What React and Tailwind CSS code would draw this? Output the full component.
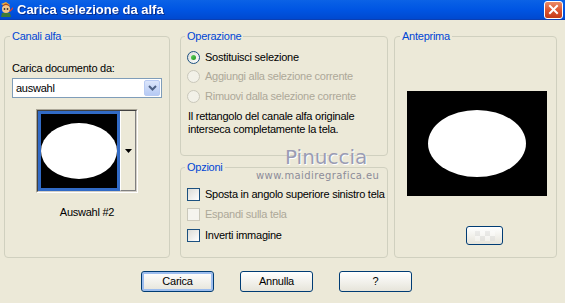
import React from 'react';

const Radio = ({ checked, disabled, label }) => (
  <div className="flex items-center h-[13px]">
    <span
      className={`w-[13px] h-[13px] rounded-full border flex items-center justify-center ${
        disabled ? 'border-[#CAC8BB] bg-[#F2F1E8]' : 'border-[#1C5180] bg-gradient-to-br from-[#DCDCD7] to-white'
      }`}
    >
      {checked && <span className="w-[5px] h-[5px] rounded-full bg-gradient-to-br from-[#63D45F] to-[#179417]" />}
    </span>
    <span className={`ml-[5px] ${disabled ? 'text-[#ACA899]' : 'text-black'}`}>{label}</span>
  </div>
);

const Check = ({ disabled, label }) => (
  <div className="flex items-center h-[13px]">
    <span
      className={`w-[13px] h-[13px] border ${
        disabled ? 'border-[#CAC8BB] bg-[#F5F4EE]' : 'border-[#1C5180] bg-gradient-to-br from-[#DCDCD7] to-white'
      }`}
    />
    <span className={`ml-[5px] ${disabled ? 'text-[#ACA899]' : 'text-black'}`}>{label}</span>
  </div>
);

const XpButton = ({ children, focused }) => (
  <button
    className={`w-[73px] h-[21px] rounded-[3px] border border-[#003C74] bg-gradient-to-b from-white to-[#E6E4DA] text-black leading-none ${
      focused ? 'shadow-[inset_0_0_0_2px_#9DBDEE]' : ''
    }`}
  >
    {children}
  </button>
);

const Group = ({ title, className, legendClass = 'ml-[5px]', children }) => (
  <fieldset className={`border border-[#D0D0BF] rounded-[4px] p-0 ${className}`}>
    <legend className={`${legendClass} px-[2px] leading-[13px] text-[#0046D5]`}>{title}</legend>
    {children}
  </fieldset>
);

export default function App() {
  return (
    <div className="relative w-[565px] h-[303px] overflow-hidden bg-[#ECE9D8] text-[11px] tracking-[-0.25px] font-['Liberation_Sans',Arial,sans-serif]">
      {/* title bar */}
      <div className="h-[20px] flex items-center bg-gradient-to-b from-[#0B62E6] via-[#0055E3] to-[#0049D0] border-b border-[#0A3FB4]">
        <svg width="15" height="17" viewBox="0 0 15 17" className="ml-[-1px]">
          <path d="M2 3 L7 1 L11 4 L8 6 Z" fill="#E8B040" />
          <circle cx="7" cy="8" r="4" fill="#F2C68A" />
          <path d="M3 6 Q7 2 11 6 L10 4 Q7 1 4 4 Z" fill="#B04A18" />
          <circle cx="5.5" cy="8" r="0.9" fill="#333" />
          <circle cx="8.5" cy="8" r="0.9" fill="#333" />
          <path d="M3 12 L11 12 L12 16 L2 16 Z" fill="#3A7A3A" />
          <path d="M10 10 L14 6 L14 8 L11 11 Z" fill="#D84030" />
        </svg>
        <span className="ml-[3px] text-white font-bold text-[13px] tracking-normal drop-shadow-[1px_1px_0_#0A2E8C]">
          Carica selezione da alfa
        </span>
        <div className="ml-auto mr-[2px] w-[19px] h-[18px] rounded-[3px] border border-white bg-gradient-to-b from-[#E98A68] via-[#DC5530] to-[#C43A16] flex items-center justify-center">
          <svg width="11" height="11" viewBox="0 0 11 11">
            <path d="M2 2 L9 9 M9 2 L2 9" stroke="white" strokeWidth="2" strokeLinecap="square" />
          </svg>
        </div>
      </div>

      {/* groups */}
      <div className="flex pt-[10px]">
        <Group title="Canali alfa" className="ml-[4px] w-[166px] h-[228px]">
          <div className="px-[7px]">
            <div className="mt-[19px] leading-[13px]">Carica documento da:</div>
            <div className="mt-[3px] h-[20px] border border-[#7F9DB9] bg-white flex items-center">
              <span className="ml-[3px]">auswahl</span>
              <div className="ml-auto mr-[1px] w-[16px] h-[16px] rounded-[2px] bg-gradient-to-b from-[#DCE6FB] to-[#B6CAF4] border border-[#B9CBF3] flex items-center justify-center">
                <svg width="9" height="6" viewBox="0 0 9 6">
                  <path d="M1 1 L4.5 4.5 L8 1" stroke="#4D6185" strokeWidth="2" fill="none" />
                </svg>
              </div>
            </div>
            <div className="mt-[11px] flex justify-center">
              <div className="flex border border-t-[#ACA899] border-l-[#ACA899] border-b-white border-r-white">
                <div className="flex border border-t-[#404040] border-l-[#404040] border-b-[#D4D0C8] border-r-[#D4D0C8]">
                  <div className="w-[82px] h-[80px] border-[3px] border-[#316AC5] bg-black flex items-center justify-center">
                    <svg width="76" height="74" viewBox="0 0 76 74">
                      <ellipse cx="38" cy="37" rx="38" ry="28" fill="white" />
                    </svg>
                  </div>
                  <div className="w-[16px] border-l border-white border-r border-r-[#808080] border-b border-b-[#808080] flex items-center justify-center">
                    <svg width="7" height="4" viewBox="0 0 7 4">
                      <path d="M0 0 L7 0 L3.5 4 Z" fill="black" />
                    </svg>
                  </div>
                </div>
              </div>
            </div>
            <div className="mt-[13px] text-center leading-[13px]">Auswahl #2</div>
          </div>
        </Group>

        <div className="ml-[10px] w-[208px] flex flex-col">
          <Group title="Operazione" legendClass="ml-[4px]" className="h-[126px]">
            <div className="pl-[6px] pr-[4px]">
              <div className="mt-[8px]">
                <Radio checked label="Sostituisci selezione" />
              </div>
              <div className="mt-[6px]">
                <Radio disabled label="Aggiungi alla selezione corrente" />
              </div>
              <div className="mt-[7px]">
                <Radio disabled label="Rimuovi dalla selezione corrente" />
              </div>
              <div className="mt-[7px] ml-[1px] leading-[13px]">
                Il rettangolo del canale alfa originale
                <br />
                interseca completamente la tela.
              </div>
            </div>
          </Group>
          <Group title="Opzioni" legendClass="ml-[4px]" className="mt-[5px] h-[97px]">
            <div className="pl-[6px]">
              <div className="mt-[14px]">
                <Check label="Sposta in angolo superiore sinistro tela" />
              </div>
              <div className="mt-[7px]">
                <Check disabled label="Espandi sulla tela" />
              </div>
              <div className="mt-[8px]">
                <Check label="Inverti immagine" />
              </div>
            </div>
          </Group>
        </div>

        <Group title="Anteprima" className="ml-[6px] w-[163px] h-[228px]">
          <div className="mt-[48px] ml-[12px] w-[140px] h-[105px] bg-black flex items-center justify-center">
            <svg width="98" height="67" viewBox="0 0 98 67">
              <ellipse cx="49" cy="33.5" rx="49" ry="33.5" fill="white" />
            </svg>
          </div>
          <div className="mt-[30px] ml-[71px] w-[37px] h-[19px] rounded-[3px] border border-[#003C74] bg-gradient-to-b from-white to-[#E6E4DA] flex items-center justify-center">
            <div className="grid grid-cols-4 w-[20px] h-[10px] opacity-40">
              <span className="bg-[#D8D8D8]" />
              <span className="bg-white" />
              <span className="bg-[#D8D8D8]" />
              <span className="bg-white" />
              <span className="bg-white" />
              <span className="bg-[#D8D8D8]" />
              <span className="bg-white" />
              <span className="bg-[#D8D8D8]" />
            </div>
          </div>
        </Group>
      </div>

      {/* buttons */}
      <div className="flex gap-[26px] pl-[141px] mt-[13px]">
        <XpButton focused>Carica</XpButton>
        <XpButton>Annulla</XpButton>
        <XpButton>?</XpButton>
      </div>

      {/* watermark */}
      <div className="absolute left-[285px] top-[146px] text-[20px] leading-[22px] tracking-[0px] text-[#9A9CB4] [text-shadow:1px_1px_0_#FFFFFF] font-['DejaVu_Sans',sans-serif]">
        Pinuccia
      </div>
      <div className="absolute left-[256px] top-[170px] text-[10px] leading-[11px] tracking-[0.4px] text-[#8C8C98] font-['DejaVu_Sans',sans-serif]">
        www.maidiregrafica.eu
      </div>
    </div>
  );
}
